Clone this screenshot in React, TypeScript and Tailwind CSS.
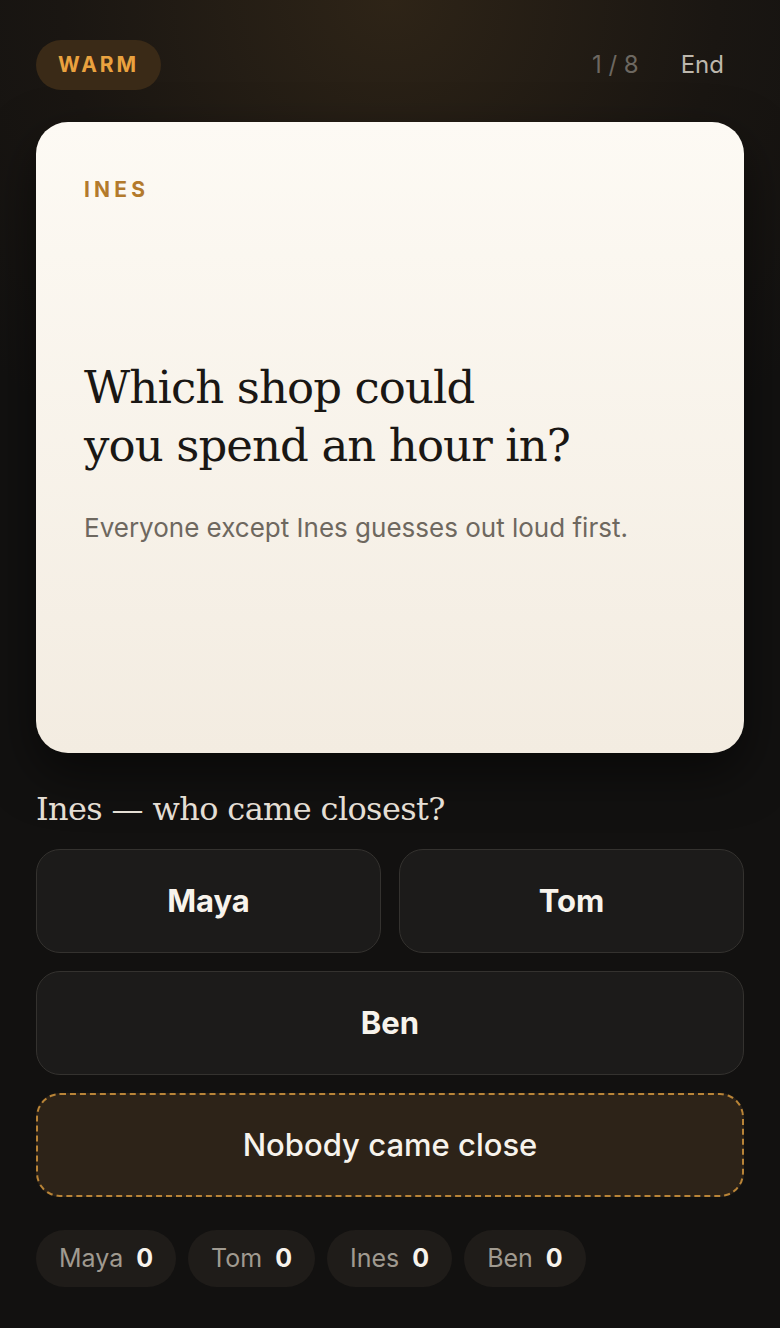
import React from 'react'

const sans = { fontFamily: 'Inter, "Noto Sans", sans-serif' }
const serif = { fontFamily: '"DejaVu Serif", "Liberation Serif", serif' }

const players = ['Maya', 'Tom', 'Ines', 'Ben']

export default function App() {
  return (
    <div
      className="min-h-[1328px] w-full bg-[#121110] bg-[radial-gradient(ellipse_70%_40%_at_50%_0%,#2e2417_0%,#1a1612_60%,#121110_100%)] px-9 pt-10 pb-10 text-white"
      style={sans}
    >
      {/* top bar */}
      <div className="flex h-[50px] items-center justify-between">
        <div className="flex h-[50px] items-center rounded-full bg-[#3a2a17] px-[22px] text-[21px] font-bold tracking-[0.14em] text-[#eaa23f]">
          WARM
        </div>
        <div className="flex items-center gap-[42px] pr-[20px] text-[24px]">
          <span className="text-[#6d6861]">1 / 8</span>
          <span className="text-[#bdb7ad]">End</span>
        </div>
      </div>

      {/* prompt card */}
      <div className="mt-8 flex h-[631px] flex-col rounded-[32px] bg-gradient-to-b from-[#fdfaf4] to-[#f3ece1] px-12 pt-[52px] shadow-[0_20px_50px_rgba(0,0,0,0.5)]">
        <div className="text-[21px] font-bold tracking-[0.2em] text-[#b37a2c]">INES</div>
        <h1 className="mt-[153px] text-[45px] leading-[58px] tracking-[-0.02em] text-[#1a1714]" style={serif}>
          Which shop could
          <br />
          you spend an hour in?
        </h1>
        <p className="mt-[33px] text-[26px] text-[#6e685f]">Everyone except Ines guesses out loud first.</p>
      </div>

      {/* question */}
      <h2 className="mt-[32px] text-[32px] tracking-[-0.02em] text-[#e4ded4]" style={serif}>
        Ines — who came closest?
      </h2>

      <div className="mt-4 grid grid-cols-2 gap-[18px]">
        {['Maya', 'Tom'].map((name) => (
          <button
            key={name}
            className="h-[104px] rounded-[24px] border border-[#34322f] bg-[#1c1b1a] text-[31px] font-bold text-[#f7f3ec]"
          >
            {name}
          </button>
        ))}
        <button className="col-span-2 h-[104px] rounded-[24px] border border-[#34322f] bg-[#1c1b1a] text-[31px] font-bold text-[#f7f3ec]">
          Ben
        </button>
        <button className="col-span-2 h-[104px] rounded-[24px] border-2 border-dashed border-[#b98437] bg-[#2d2318] text-[31px] font-medium text-[#f7f3ec]">
          Nobody came close
        </button>
      </div>

      {/* scores */}
      <div className="mt-[33px] flex gap-3">
        {players.map((p) => (
          <div
            key={p}
            className="flex h-[57px] items-center gap-[13px] rounded-full bg-[#1f1c19] px-[23px] text-[25px]"
          >
            <span className="text-[#a09a90]">{p}</span>
            <span className="font-bold text-[#f7f3ec]">0</span>
          </div>
        ))}
      </div>
    </div>
  )
}
